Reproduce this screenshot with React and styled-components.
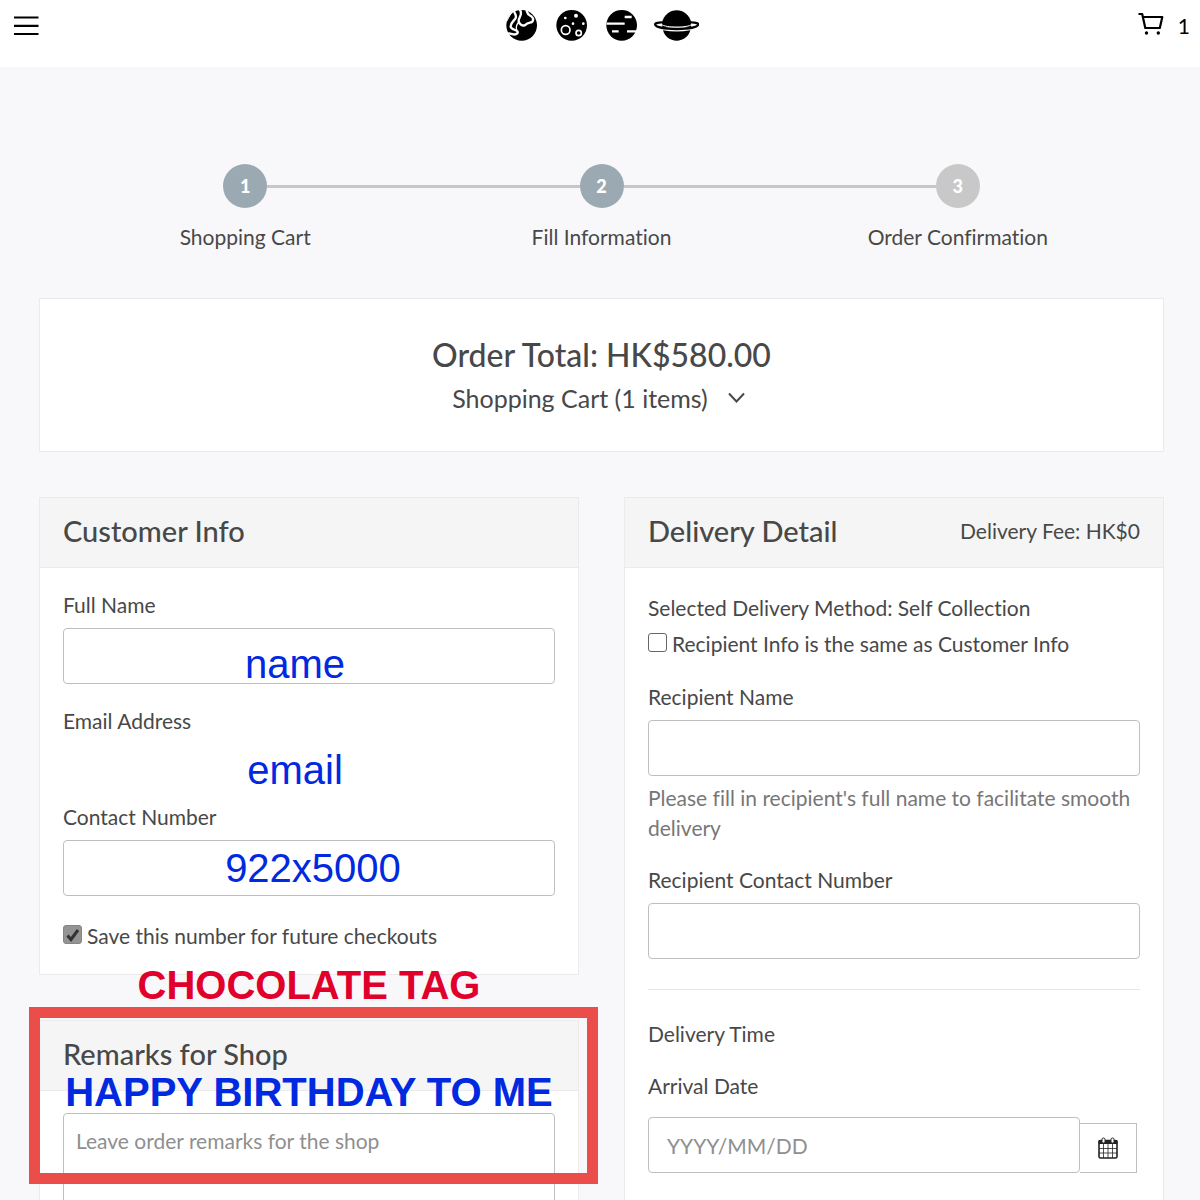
import styled, {createGlobalStyle} from "styled-components";

const GlobalStyle = createGlobalStyle`
  * {
    box-sizing: border-box;
  }
  body {
    margin: 0;
    background-color: #f8f8fb;
    color: #484848;
    font-family: Lato, "Open Sans", sans-serif;
    font-size: 21px;
    line-height: 30px;
    font-variant-ligatures: none;
  }
`;
const Header = styled.header`
  display: grid;
  grid-template-columns: 1fr auto 1fr;
  align-items: start;
  height: 67px;
  padding: 9px 10px 0 14px;
  background-color: #fff;
  color: #000;
`;
const IconButton = styled.button`
  display: flex;
  align-items: center;
  height: 34px;
  padding: 0;
  border: 0;
  background: none;
  color: inherit;
`;
const CartLink = styled.a`
  display: flex;
  align-items: center;
  justify-content: flex-end;
  gap: 14px;
  height: 34px;
  color: inherit;
  text-decoration: none;
  svg {
    margin-bottom: 4px;
  }
`;
const Main = styled.main`
  padding: 97px 36px 40px 39px;
`;
const Steps = styled.ol`
  display: grid;
  grid-template-columns: repeat(3, 1fr);
  margin: 0 0 46px;
  padding: 0 28px;
  list-style: none;
  text-align: center;
`;
const StepTop = styled.div`
  display: flex;
  align-items: center;
  margin-bottom: 14px;
`;
const StepLine = styled.span`
  flex: 1;
  height: 3px;
  background-color: ${props => props.$hidden ? 'transparent' : '#c6c7c8'};
`;
const StepCircle = styled.span`
  width: 44px;
  height: 44px;
  border-radius: 50%;
  background-color: ${props => props.$active ? '#9baab2' : '#c8c8c8'};
  color: #fff;
  font-size: 18px;
  font-weight: 900;
  line-height: 44px;
`;
const Card = styled.section`
  position: relative;
  border: 1px solid #ebebed;
  background-color: #fff;
`;
const Summary = styled(Card)`
  display: flex;
  flex-direction: column;
  align-items: center;
  margin-bottom: 45px;
  padding: 36px 24px 38px;
`;
const Total = styled.h1`
  margin: 0 0 8px;
  font-size: 32px;
  font-weight: 500;
  line-height: 40px;
`;
const CartToggle = styled.button`
  display: flex;
  align-items: center;
  gap: 20px;
  padding: 0 6px 0 0;
  border: 0;
  background: none;
  color: inherit;
  font: inherit;
  font-size: 25px;
`;
const Columns = styled.div`
  display: grid;
  grid-template-columns: repeat(2, minmax(0, 1fr));
  gap: 45px;
  align-items: start;
`;
const Column = styled.div`
  display: flex;
  flex-direction: column;
  gap: 45px;
`;
const CardHeader = styled.div`
  display: flex;
  align-items: center;
  justify-content: space-between;
  height: 70px;
  padding: 0 23px 4px;
  border-bottom: 1px solid #ebebed;
  background-color: #f5f5f5;
`;
const CardTitle = styled.h2`
  margin: 0;
  font-size: 29px;
  font-weight: 500;
`;
const CardBody = styled.div`
  padding: 22px 23px ${props => props.$bottom || 0}px;
`;
const Line = styled.p`
  margin: 0;
  padding: 3px 0;
`;
const Field = styled.div`
  position: relative;
  margin-bottom: 22px;
`;
const Label = styled.label`
  display: block;
  margin-bottom: 8px;
`;
const Input = styled.input`
  display: block;
  width: 100%;
  height: 56px;
  padding: 0 18px;
  border: 1px solid #bfbfbf;
  border-radius: 4px;
  background-color: #fff;
  color: inherit;
  font: inherit;
  &::placeholder {
    color: #8f8f8f;
    opacity: 1;
  }
`;
const TextArea = styled(Input)`
  height: 120px;
  padding: 12px;
  resize: none;
`;
const EmailValue = styled.output`
  display: block;
  height: 36px;
`;
const CheckRow = styled.label`
  display: flex;
  gap: 5px;
  margin-bottom: 20px;
  padding: 3px 0;
`;
const CheckBox = styled.input`
  appearance: none;
  width: 19px;
  height: 19px;
  margin: 4px 0 0;
  border: 1px solid #666;
  border-radius: 3px;
  background-color: #fff;
  &:checked {
    border-color: #858585;
    background: #949494 url("data:image/svg+xml,%3Csvg xmlns='http://www.w3.org/2000/svg' viewBox='0 0 16 16'%3E%3Cpath d='M2.5 8.5l3.5 4L13 3' fill='none' stroke='%23333' stroke-width='3'/%3E%3C/svg%3E") center / 16px no-repeat;
  }
`;
const Help = styled.p`
  margin: 7px 0 0;
  color: #777;
`;
const Divider = styled.hr`
  height: 1px;
  margin: 30px 0 29px;
  border: 0;
  background-color: #e6e6e6;
`;
const Subtitle = styled.h3`
  margin: 0 0 22px;
  font-size: 21px;
  font-weight: 400;
`;
const DateRow = styled.div`
  display: flex;
  align-items: flex-end;
  padding: 8px 3px 0 0;
`;
const DateButton = styled.button`
  display: flex;
  flex-shrink: 0;
  align-items: center;
  justify-content: center;
  width: 57px;
  height: 50px;
  padding: 0;
  border: 1px solid #bfbfbf;
  border-left: 0;
  background-color: #fff;
`;
// notes laid over the form
const Note = styled.span`
  position: absolute;
  top: ${props => props.$top}px;
  left: 0;
  right: 0;
  padding-left: ${props => props.$left || 0}px;
  padding-right: ${props => props.$right || 0}px;
  color: ${props => props.$red ? '#e0002b' : '#0029e0'};
  font-family: "Liberation Sans", Arial, sans-serif;
  font-size: 40px;
  font-weight: ${props => props.$bold ? 700 : 400};
  line-height: 44px;
  text-align: center;
  white-space: nowrap;
  pointer-events: none;
`;
const Highlight = styled.div`
  position: absolute;
  top: -14px;
  left: -11px;
  right: -20px;
  height: 177px;
  border: 11px solid #ea4d4a;
  pointer-events: none;
`;

const steps = ['Shopping Cart', 'Fill Information', 'Order Confirmation'];

function MenuIcon() {
  return (
    <svg width="25" height="20" viewBox="0 0 25 20" stroke="currentColor" strokeWidth="2.2" aria-hidden="true">
      <path d="M0 1.5h24.5M0 9.8h24.5M0 18h24.5" />
    </svg>
  );
}

function Planets() {
  return (
    <svg width="194" height="34" viewBox="45 27 582 102" role="img" aria-label="Planets">
      <circle cx="95" cy="76" r="46" />
      <g fill="none" stroke="#fff" strokeLinecap="round" strokeLinejoin="round">
        <path d="M72 32C74 44 82 46 76 56C70 64 61 70 62 80C63 88 72 88 80 92C88 97 80 105 70 103L57 100" strokeWidth="7" />
        <path d="M90 30C100 44 84 54 86 64C88 74 97 78 104 76C112 68 118 68 126 66C134 58 126 48 119 46C112 42 112 38 110 32" strokeWidth="7" />
        <path d="M86 66C80 74 76 80 80 90" strokeWidth="4" />
        <path d="M50 64L62 42" strokeWidth="3" />
      </g>
      <circle cx="245" cy="76" r="46" />
      <g fill="none" stroke="#fff" strokeWidth="5">
        <circle cx="227" cy="90" r="13" />
        <circle cx="266" cy="99" r="8" />
      </g>
      <g fill="#fff">
        <circle cx="258" cy="47" r="6" />
        <circle cx="226" cy="54" r="4" />
        <circle cx="249" cy="71" r="4" />
        <circle cx="280" cy="71" r="4" />
      </g>
      <circle cx="395" cy="76" r="46" />
      <path d="M404 51h21M350 71h54M366 94h20M411 94h31" stroke="#fff" strokeWidth="7" />
      <path d="M516 67C522 45 540 31 560 31C580 31 598 45 604 67L603 82L517 82Z" />
      <path d="M519 91C546 96 574 96 601 91C596 109 580 122 560 122C540 122 524 109 519 91Z" />
      <path d="M518 67C500 67 494 70 496 75C500 83 530 87 560 87C590 87 620 83 624 75C626 70 620 67 602 67" fill="none" stroke="#000" strokeWidth="7" />
      <path d="M515 73C520 79 540 81 560 81C580 81 600 79 605 73" fill="none" stroke="#fff" strokeWidth="3" />
      <path d="M516 71L503 73L516 78ZM604 71L617 73L604 78Z" fill="#fff" />
    </svg>
  );
}

function CartIcon() {
  return (
    <svg width="26" height="24" viewBox="0 0 26 24" fill="none" stroke="currentColor" strokeWidth="2.2" strokeLinejoin="round" aria-hidden="true">
      <path d="M0.5 2H4.2L7.3 16H21.8L24.3 5H5" />
      <circle cx="8.5" cy="21" r="1.7" fill="currentColor" stroke="none" />
      <circle cx="20.3" cy="21" r="1.7" fill="currentColor" stroke="none" />
    </svg>
  );
}

function ChevronIcon() {
  return (
    <svg width="17" height="12" viewBox="0 0 17 12" fill="none" stroke="currentColor" strokeWidth="2" aria-hidden="true">
      <path d="M1 1.5l7.5 8 7.5-8" />
    </svg>
  );
}

function CalendarIcon() {
  return (
    <svg width="20" height="22" viewBox="0 0 20 22" fill="none" stroke="#222" aria-hidden="true">
      <rect x="1" y="3.5" width="18" height="17.5" rx="1.5" strokeWidth="1.6" />
      <path d="M1 3.5h18v3H1z" fill="#222" />
      <path d="M1 11.5h18M1 16h18M5.5 7v14M10 7v14M14.5 7v14" strokeWidth="0.8" />
      <rect x="4" y="1" width="3" height="5" rx="1.5" fill="#fff" />
      <rect x="13" y="1" width="3" height="5" rx="1.5" fill="#fff" />
    </svg>
  );
}

export default function App() {
  return (
    <>
      <GlobalStyle />
      <Header>
        <IconButton type="button" aria-label="Menu"><MenuIcon /></IconButton>
        <Planets />
        <CartLink href="#cart" aria-label="Cart, 1 item">
          <CartIcon />
          <span>1</span>
        </CartLink>
      </Header>
      <Main>
        <Steps>
          {steps.map((step, index) => (
            <li key={step}>
              <StepTop>
                <StepLine $hidden={index === 0} />
                <StepCircle $active={index < 2}>{index + 1}</StepCircle>
                <StepLine $hidden={index === steps.length - 1} />
              </StepTop>
              {step}
            </li>
          ))}
        </Steps>
        <Summary>
          <Total>Order Total: HK$580.00</Total>
          <CartToggle type="button">
            Shopping Cart (1 items)
            <ChevronIcon />
          </CartToggle>
        </Summary>
        <Columns>
          <Column>
            <Card>
              <CardHeader>
                <CardTitle>Customer Info</CardTitle>
              </CardHeader>
              <CardBody>
                <Field>
                  <Label htmlFor="name">Full Name</Label>
                  <Input id="name" type="text" />
                  <Note $top={52} $right={28}>name</Note>
                </Field>
                <Field>
                  <Label htmlFor="email">Email Address</Label>
                  <EmailValue id="email" />
                  <Note $top={42} $right={28}>email</Note>
                </Field>
                <Field>
                  <Label htmlFor="phone">Contact Number</Label>
                  <Input id="phone" type="tel" />
                  <Note $top={44} $left={8}>922x5000</Note>
                </Field>
                <CheckRow>
                  <CheckBox type="checkbox" defaultChecked />
                  Save this number for future checkouts
                </CheckRow>
              </CardBody>
            </Card>
            <Card>
              <CardHeader>
                <CardTitle>Remarks for Shop</CardTitle>
              </CardHeader>
              <CardBody $bottom={24}>
                <TextArea as="textarea" aria-label="Remarks for Shop" placeholder="Leave order remarks for the shop" />
              </CardBody>
              <Highlight />
              <Note $top={-58} $bold $red>CHOCOLATE TAG</Note>
              <Note $top={49} $bold>HAPPY BIRTHDAY TO ME</Note>
            </Card>
          </Column>
          <Card>
            <CardHeader>
              <CardTitle>Delivery Detail</CardTitle>
              <span>Delivery Fee: HK$0</span>
            </CardHeader>
            <CardBody $bottom={24}>
              <Line>Selected Delivery Method: Self Collection</Line>
              <CheckRow>
                <CheckBox type="checkbox" />
                Recipient Info is the same as Customer Info
              </CheckRow>
              <Field>
                <Label htmlFor="recipient">Recipient Name</Label>
                <Input id="recipient" type="text" />
                <Help>Please fill in recipient's full name to facilitate smooth delivery</Help>
              </Field>
              <Field>
                <Label htmlFor="recipient-phone">Recipient Contact Number</Label>
                <Input id="recipient-phone" type="tel" />
              </Field>
              <Divider />
              <Subtitle>Delivery Time</Subtitle>
              <Field>
                <Label htmlFor="date">Arrival Date</Label>
                <DateRow>
                  <Input id="date" type="text" placeholder="YYYY/MM/DD" />
                  <DateButton type="button" aria-label="Open calendar"><CalendarIcon /></DateButton>
                </DateRow>
              </Field>
            </CardBody>
          </Card>
        </Columns>
      </Main>
    </>
  );
}
